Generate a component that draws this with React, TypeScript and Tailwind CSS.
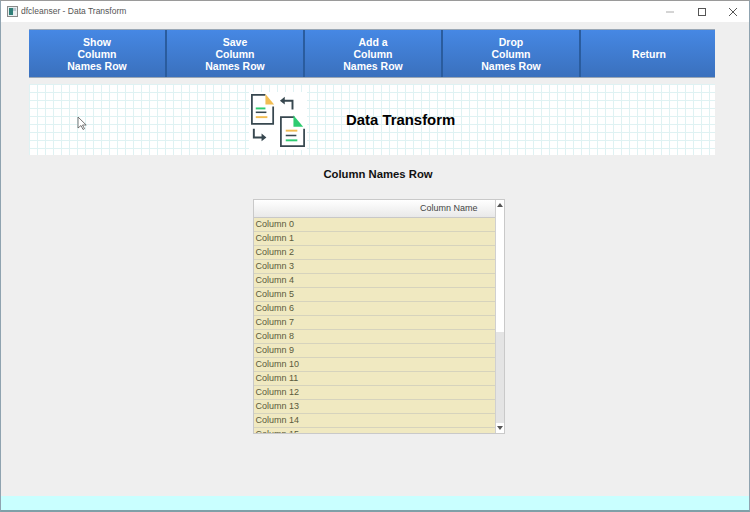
import React from "react";

const buttons = [
  ["Show", "Column", "Names Row"],
  ["Save", "Column", "Names Row"],
  ["Add a", "Column", "Names Row"],
  ["Drop", "Column", "Names Row"],
  ["Return"],
];

const rows = Array.from({ length: 15 }, (_, i) => `Column ${i}`);

function DocIcon() {
  return (
    <svg width="58" height="60" viewBox="0 0 60 60" fill="none" aria-hidden="true">
      <rect width="60" height="60" fill="#ffffff" />
      <path d="M17 3H3v30h22V15" stroke="#37474f" strokeWidth="1.8" />
      <path d="M17 2l9 11h-9z" fill="#f2bd52" />
      <path d="M7 17h10" stroke="#2ecc71" strokeWidth="2" />
      <path d="M7 21h11" stroke="#37474f" strokeWidth="1.6" />
      <path d="M7 26h12" stroke="#f2bd52" strokeWidth="2" />
      <path d="M47 26H33v30h24V38" stroke="#37474f" strokeWidth="1.8" />
      <path d="M46 24l10 12H46z" fill="#2ecc71" />
      <path d="M38 40h12" stroke="#f2bd52" strokeWidth="2" />
      <path d="M38 45h11" stroke="#37474f" strokeWidth="1.6" />
      <path d="M38 50h12" stroke="#2ecc71" strokeWidth="2" />
      <path d="M45 18v-9H34" stroke="#37474f" strokeWidth="2" />
      <path d="M37 5l-5 4 5 4z" fill="#37474f" />
      <path d="M5 38v9h10" stroke="#37474f" strokeWidth="2" />
      <path d="M13 43l5 4-5 4z" fill="#37474f" />
    </svg>
  );
}

export default function App() {
  return (
    <div className="w-[750px] h-[512px] flex flex-col bg-[#efefef] border-l border-r border-t border-b-2 border-l-[#8fa3b0] border-r-[#8fa3b0] border-t-[#9a9a9a] border-b-[#7fa0a8] font-['Liberation_Sans',Arial,sans-serif] overflow-hidden relative">
      <div className="h-[21px] bg-white flex items-center shrink-0">
        <svg className="ml-[6px]" width="11" height="11" viewBox="0 0 11 11" aria-hidden="true">
          <rect x="0.5" y="0.5" width="10" height="10" fill="#e8eef0" stroke="#8a8a8a" />
          <rect x="2" y="2" width="4" height="7" fill="#2f7f78" />
          <rect x="6" y="2" width="3" height="3" fill="#b9c6d0" />
        </svg>
        <span className="ml-[3px] text-[8.5px] text-[#555555]">dfcleanser - Data Transform</span>
        <div className="ml-auto flex items-center gap-[23.5px] pr-[12px]">
          <svg width="8" height="8" viewBox="0 0 8 8" aria-hidden="true"><path d="M0 4h8" stroke="#aaaaaa" strokeWidth="1" /></svg>
          <svg width="8" height="8" viewBox="0 0 8 8" aria-hidden="true"><rect x="0.5" y="0.5" width="7" height="7" fill="none" stroke="#555555" /></svg>
          <svg width="8" height="8" viewBox="0 0 8 8" aria-hidden="true"><path d="M0 0l8 8M8 0l-8 8" stroke="#555555" strokeWidth="1" /></svg>
        </div>
      </div>

      <div className="flex-1 flex flex-col items-center pt-[7px]">
        <div className="w-[686px] ml-[-6px] h-[49px] flex border-t border-b border-[#9aa7b5]">
          {buttons.map((lines, i) => (
            <div
              key={i}
              className="w-[138px] last:w-auto last:flex-1 last:pl-[2px] flex flex-col items-center justify-center pt-[1px] border-r-2 border-r-[#2a5c9e] last:border-r-0 bg-gradient-to-b from-[#4688e4] to-[#3a70bd] text-white text-[10.5px] font-bold leading-[12px]"
            >
              {lines.map((l) => (
                <span key={l}>{l}</span>
              ))}
            </div>
          ))}
        </div>

        <div className="w-[686px] ml-[-6px] h-[71px] mt-[6px] flex items-center bg-white bg-[linear-gradient(#dff2f3_1px,transparent_1px),linear-gradient(90deg,#dff2f3_1px,transparent_1px)] bg-[size:8px_8px]">
          <div className="ml-[220px] mt-[2px] flex items-center">
            <DocIcon />
          </div>
          <span className="ml-[39px] mt-[2px] text-[14.9px] font-bold text-black">Data Transform</span>
        </div>

        <div className="w-[686px] ml-[6px] mt-[12px] text-center text-[11.3px] font-bold text-[#111111] leading-[14px]">Column Names Row</div>

        <div className="mt-[18px] ml-[7px] w-[252px] h-[235px] border border-[#c9c9c9] flex bg-white">
          <div className="w-[241px] flex flex-col overflow-hidden">
            <div className="h-[18px] shrink-0 bg-gradient-to-b from-white to-[#e9e9e9] border-b border-[#c8c8c8] flex items-center justify-end pr-[17px] text-[9px] text-[#444444]">Column Name</div>
            {rows.map((r) => (
              <div key={r} className="h-[14px] shrink-0 bg-[#f0e9c1] border-b border-[#d6d3bd] flex items-center pl-[2px] text-[9px] text-[#5a5a3c]">{r}</div>
            ))}
            <div className="h-[14px] shrink-0 bg-[#f0e9c1] flex items-center pl-[2px] text-[9px] text-[#5a5a3c]">Column 15</div>
          </div>
          <div className="flex-1 flex flex-col border-l border-[#d0d0d0]">
            <div className="h-[10px] flex items-center justify-center">
              <svg width="6" height="4" viewBox="0 0 6 4" aria-hidden="true"><path d="M3 0l3 4H0z" fill="#555555" /></svg>
            </div>
            <div className="h-[122px] bg-white" />
            <div className="flex-1 bg-[#e4e4e4]" />
            <div className="h-[10px] flex items-center justify-center">
              <svg width="6" height="4" viewBox="0 0 6 4" aria-hidden="true"><path d="M3 4l3-4H0z" fill="#555555" /></svg>
            </div>
          </div>
        </div>
      </div>

      <div className="h-[14px] bg-[#c9ffff] shrink-0" />

      <svg className="absolute left-[76px] top-[115px]" width="10" height="15" viewBox="0 0 10 15" aria-hidden="true">
        <path d="M1 1v11l3-2.5 2 4 1.5-.8-2-3.7h3.7z" fill="#ffffff" stroke="#555555" strokeWidth="0.8" />
      </svg>
    </div>
  );
}
